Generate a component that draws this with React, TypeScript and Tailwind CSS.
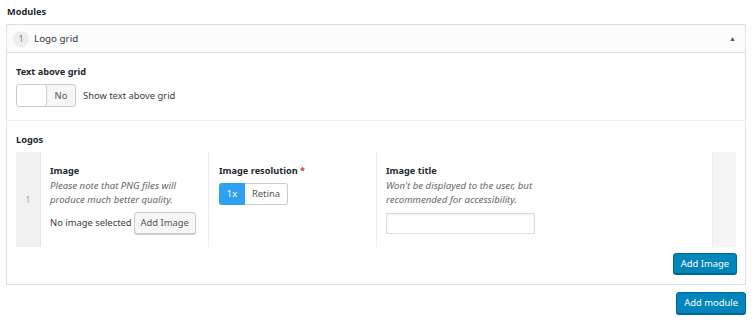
export default function App() {
  return (
    <div className="w-[752px] h-[322px] bg-white text-[#3c3c3c] text-[9.4px] leading-[14px] px-[6px] pt-[5px]" style={{ fontFamily: '"Noto Sans", "Open Sans", sans-serif' }}>
      <div className="font-bold text-[#23282d] text-[9.2px] h-[19px] pl-[1px]">Modules</div>

      <div className="border border-[#e1e1e1] w-[740px]">
        {/* header */}
        <div className="h-[28px] flex items-center justify-between border-b border-[#e1e1e1] bg-[#fcfcfc] pl-[6px] pr-[9px]">
          <div className="flex items-center gap-[5px]">
            <span className="w-[16px] h-[16px] rounded-full bg-[#ededed] text-[#777] text-[9px] flex items-center justify-center">1</span>
            <span className="text-[9.8px] text-[#32373c]">Logo grid</span>
          </div>
          <span className="text-[7px] text-[#555]">▲</span>
        </div>

        {/* text above grid */}
        <div className="px-[9px] pt-[12px] pb-[13px] border-b border-[#eeeeee]">
          <div className="font-bold text-[#23282d] text-[9.2px] mb-[5px]">Text above grid</div>
          <div className="flex items-center gap-[7px]">
            <div className="w-[60px] h-[23px] flex rounded-[3px] border border-[#ccc] bg-[#f7f7f7] overflow-hidden">
              <div className="w-[30px] h-full bg-white border-r border-[#ccc] rounded-[3px]" />
              <div className="flex-1 flex items-center justify-center text-[#555]">No</div>
            </div>
            <span>Show text above grid</span>
          </div>
        </div>

        {/* logos */}
        <div className="px-[9px] pt-[12px] pb-[10px]">
          <div className="font-bold text-[#23282d] text-[9.2px] mb-[5px]">Logos</div>
          <div className="flex h-[95px] w-[720px]">
            <div className="w-[25px] bg-[#f1f1f1] border-r border-[#e5e5e5] flex items-center justify-center text-[#aaa]">1</div>
            <div className="w-[168px] border-r border-[#eeeeee] pl-[9px] pt-[12px]">
              <div className="font-bold text-[#23282d] text-[9.2px] leading-[14px] mb-[1px]">Image</div>
              <div className="italic text-[#666] text-[9.6px] leading-[14px]">Please note that PNG files will<br />produce much better quality.</div>
              <div className="flex items-center gap-[2px] mt-[5px] whitespace-nowrap">
                <span>No image selected</span>
                <span className="h-[22px] px-[6px] flex items-center border border-[#ccc] rounded-[3px] bg-[#f7f7f7] shadow-[0_1px_0_#ccc] text-[#555]">Add Image</span>
              </div>
            </div>
            <div className="w-[168px] border-r border-[#eeeeee] pl-[10px] pt-[12px]">
              <div className="font-bold text-[#23282d] text-[9.2px] leading-[14px] mb-[5px]">Image resolution <span className="text-[#dc3232]">*</span></div>
              <div className="flex h-[22px]">
                <span className="w-[26px] flex items-center justify-center bg-[#2ea2f0] text-white rounded-l-[3px]">1x</span>
                <span className="w-[43px] flex items-center justify-center border border-l-0 border-[#ccc] rounded-r-[3px] text-[#555]">Retina</span>
              </div>
            </div>
            <div className="flex-1 pl-[9px] pt-[12px]">
              <div className="font-bold text-[#23282d] text-[9.2px] leading-[14px] mb-[1px]">Image title</div>
              <div className="italic text-[#666] text-[9.6px] leading-[14px]">Won't be displayed to the user, but<br />recommended for accessibility.</div>
              <div className="w-[149px] h-[21px] border border-[#ddd] mt-[6px] shadow-[inset_0_1px_2px_rgba(0,0,0,0.07)]" />
            </div>
            <div className="w-[24px] bg-[#f5f5f5] border-l border-[#eeeeee]" />
          </div>
          <div className="flex justify-end mt-[6px]">
            <span className="h-[21px] px-[7px] flex items-center bg-[#0085ba] border border-[#006799] rounded-[3px] text-white shadow-[0_1px_0_#006799] mr-[-1px]">Add Image</span>
          </div>
        </div>
      </div>

      <div className="flex justify-end w-[740px] mt-[7px]">
        <span className="h-[22px] px-[7px] flex items-center bg-[#0085ba] border border-[#006799] rounded-[3px] text-white shadow-[0_1px_0_#006799]">Add module</span>
      </div>
    </div>
  )
}
